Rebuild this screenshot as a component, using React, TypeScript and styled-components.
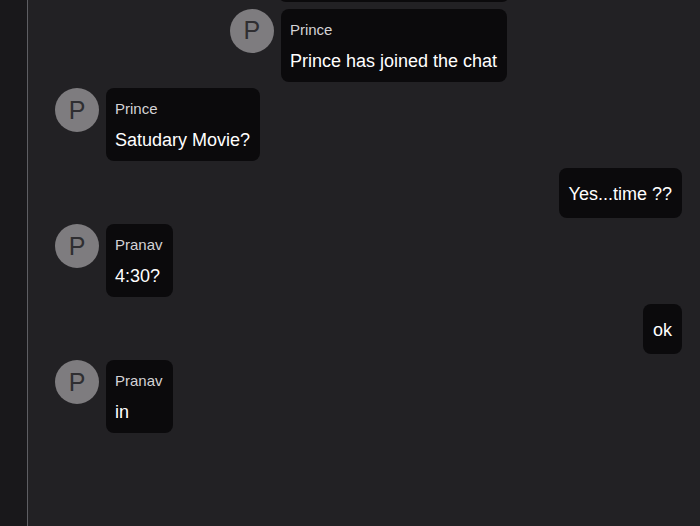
import { createGlobalStyle } from "styled-components";
import styled from "styled-components";

const GlobalStyle = createGlobalStyle`
    html, body {
        margin: 0;
        padding: 0;
        height: 100%;
        background: #222124;
        font-family: "Liberation Sans", Arial, sans-serif;
    }
    #root {
        height: 100%;
    }
`;

type Message = {
    id: number;
    author: string;
    text: string;
    kind: "join" | "in" | "out";
};

const messages: Message[] = [
    { id: 1, author: "Pranav", text: "Pranav has joined the chat", kind: "join" },
    { id: 2, author: "Prince", text: "Prince has joined the chat", kind: "join" },
    { id: 3, author: "Prince", text: "Satudary Movie?", kind: "in" },
    { id: 4, author: "You", text: "Yes...time ??", kind: "out" },
    { id: 5, author: "Pranav", text: "4:30?", kind: "in" },
    { id: 6, author: "You", text: "ok", kind: "out" },
    { id: 7, author: "Pranav", text: "in", kind: "in" },
];

const Layout = styled.div`
    display: flex;
    height: 100vh;
    overflow: hidden;
`;

const Sidebar = styled.aside`
    width: 27px;
    flex-shrink: 0;
    background: #19181b;
    border-right: 1px solid #5e5e63;
`;

// newest messages sit at the bottom, older ones scroll off the top
const ChatArea = styled.main`
    flex: 1;
    display: flex;
    flex-direction: column;
    justify-content: flex-end;
    gap: 6.5px;
    padding: 0 18px 93px 27px;
    overflow: hidden;
    background: #222124;
`;

const Row = styled.div<{ $kind: Message["kind"] }>`
    display: flex;
    align-items: flex-start;
    gap: 7px;
    flex-shrink: 0;
    justify-content: ${({ $kind }) =>
        $kind === "join" ? "center" : $kind === "out" ? "flex-end" : "flex-start"};
`;

const Avatar = styled.div`
    width: 44px;
    height: 44px;
    border-radius: 50%;
    background: #7e7c7f;
    color: #2f2e31;
    font-size: 25px;
    display: flex;
    align-items: center;
    justify-content: center;
    flex-shrink: 0;
`;

const Bubble = styled.div<{ $named: boolean }>`
    background: #0b0a0c;
    border-radius: 8px;
    padding: ${({ $named }) => ($named ? "11px 10px 6px 9px" : "11px 10px 9px")};
    display: flex;
    flex-direction: column;
`;

const Author = styled.span`
    font-size: 15px;
    line-height: 20px;
    color: #d4d3d6;
    margin-bottom: 6px;
`;

const Text = styled.span`
    font-size: 18px;
    line-height: 30px;
    color: #ffffff;
    white-space: nowrap;
`;

const App = () => {
    return (
        <>
            <GlobalStyle />
            <Layout>
                <Sidebar />
                <ChatArea>
                    {messages.map((msg) => (
                        <Row key={msg.id} $kind={msg.kind}>
                            {msg.kind !== "out" && <Avatar>{msg.author[0]}</Avatar>}
                            <Bubble $named={msg.kind !== "out"}>
                                {msg.kind !== "out" && <Author>{msg.author}</Author>}
                                <Text>{msg.text}</Text>
                            </Bubble>
                        </Row>
                    ))}
                </ChatArea>
            </Layout>
        </>
    );
};

export default App;
